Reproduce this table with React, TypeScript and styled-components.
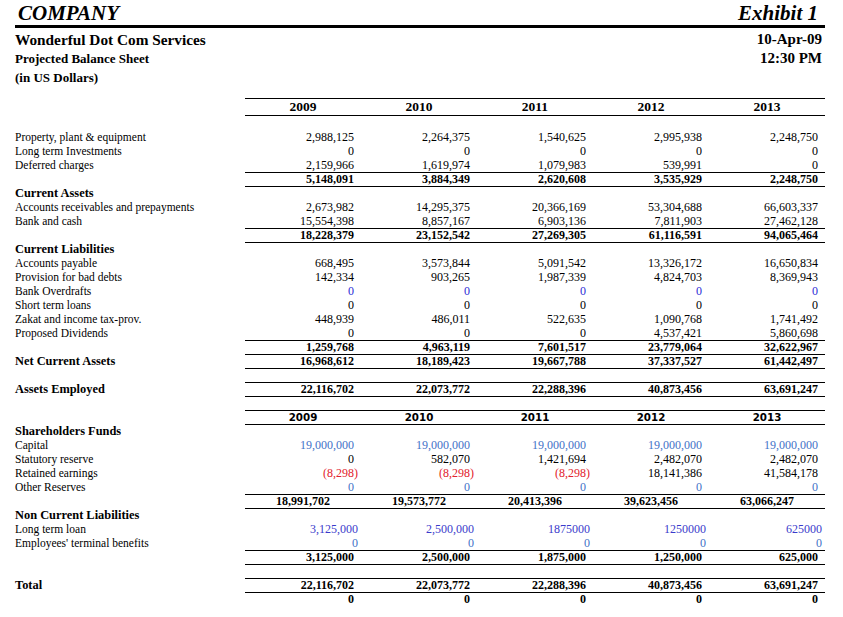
import React from "react";
import styled, { createGlobalStyle, css } from "styled-components";

const GlobalStyle = createGlobalStyle`
  html, body { margin: 0; padding: 0; background: #ffffff; }
  body { font-family: "Liberation Serif", "Times New Roman", serif; color: #000; }
  * { box-sizing: border-box; }
`;

const COLORS = {
  blue: "#2b2bd6",
  light: "#3f72c8",
  violet: "#3a3acb",
  red: "#e2212c",
};

const Page = styled.div`
  width: 843px;
  padding: 0 18px 0 15px;
`;

const TitleBar = styled.div`
  display: flex;
  justify-content: space-between;
  align-items: flex-end;
  height: 28px;
  border-bottom: 3px solid #000;
`;

const Title = styled.div<{ $side: "left" | "right" }>`
  font-size: 21px;
  font-weight: 700;
  font-style: italic;
  line-height: 23px;
  padding-left: ${(p) => (p.$side === "left" ? "3px" : "0")};
  padding-right: ${(p) => (p.$side === "right" ? "7px" : "0")};
`;

const Meta = styled.div`
  display: flex;
  justify-content: space-between;
  padding-top: 2px;
`;

const MetaLeft = styled.div`
  display: flex;
  flex-direction: column;
`;

const MetaLine = styled.div<{ $size: number }>`
  font-size: ${(p) => p.$size}px;
  font-weight: 700;
  line-height: 19px;
  white-space: nowrap;
`;

const MetaRight = styled.div`
  display: flex;
  flex-direction: column;
  align-items: flex-end;
  padding-right: 3px;
  font-size: 15px;
  font-weight: 700;
  line-height: 19px;
`;

const Sheet = styled.div`
  margin-top: 11px;
`;

const Grid = styled.div<{ $h: number }>`
  display: grid;
  grid-template-columns: 230px repeat(5, 116px);
  height: ${(p) => p.$h}px;
`;

const HeaderGrid = styled(Grid)`
  margin-bottom: 14px;
`;

const YearCell = styled.div<{ $sans?: boolean }>`
  text-align: center;
  font-weight: 700;
  ${(p) =>
    p.$sans
      ? css`
          font-family: "DejaVu Sans", Tahoma, sans-serif;
          font-size: 10.3px;
          line-height: 14px;
          box-shadow: inset 0 1px 0 #000, 0 1px 0 #000;
        `
      : css`
          font-size: 13.5px;
          line-height: 16px;
          border-top: 1px solid #000;
          border-bottom: 1px solid #000;
        `}
`;

const Label = styled.div<{ $bold?: boolean }>`
  font-size: ${(p) => (p.$bold ? 12.4 : 11.5)}px;
  line-height: 14px;
  font-weight: ${(p) => (p.$bold ? 700 : 400)};
  white-space: nowrap;
`;

const Cell = styled.div<{
  $bold?: boolean;
  $color?: string;
  $center?: boolean;
  $pr: number;
  $top?: boolean;
  $bottom?: boolean;
}>`
  font-size: 12px;
  line-height: 14px;
  white-space: nowrap;
  font-weight: ${(p) => (p.$bold ? 700 : 400)};
  color: ${(p) => p.$color || "#000"};
  text-align: ${(p) => (p.$center ? "center" : "right")};
  padding-right: ${(p) => (p.$center ? 0 : p.$pr)}px;
  box-shadow: ${(p) => {
    const s: string[] = [];
    if (p.$top) s.push("inset 0 1px 0 #000");
    if (p.$bottom) s.push("0 1px 0 #000");
    return s.length ? s.join(", ") : "none";
  }};
`;

type V = string | { t: string; c?: string; pr?: number };

type RowDef = {
  label?: string;
  labelBold?: boolean;
  values?: V[];
  bold?: boolean;
  top?: boolean;
  bottom?: boolean;
  center?: boolean;
  years?: boolean;
};

const YEARS = ["2009", "2010", "2011", "2012", "2013"];

const five = (v: V): V[] => [v, v, v, v, v];

const rows: RowDef[] = [
  { label: "Property, plant & equipment", values: ["2,988,125", "2,264,375", "1,540,625", "2,995,938", "2,248,750"] },
  { label: "Long term Investments", values: five("0") },
  { label: "Deferred charges", values: ["2,159,966", "1,619,974", "1,079,983", "539,991", "0"] },
  { values: ["5,148,091", "3,884,349", "2,620,608", "3,535,929", "2,248,750"], bold: true, top: true, bottom: true },
  { label: "Current Assets", labelBold: true },
  { label: "Accounts receivables and prepayments", values: ["2,673,982", "14,295,375", "20,366,169", "53,304,688", "66,603,337"] },
  { label: "Bank and cash", values: ["15,554,398", "8,857,167", "6,903,136", "7,811,903", "27,462,128"] },
  { values: ["18,228,379", "23,152,542", "27,269,305", "61,116,591", "94,065,464"], bold: true, top: true, bottom: true },
  { label: "Current Liabilities", labelBold: true },
  { label: "Accounts payable", values: ["668,495", "3,573,844", "5,091,542", "13,326,172", "16,650,834"] },
  { label: "Provision for bad debts", values: ["142,334", "903,265", "1,987,339", "4,824,703", "8,369,943"] },
  { label: "Bank Overdrafts", values: five({ t: "0", c: COLORS.blue }) },
  { label: "Short term loans", values: five("0") },
  { label: "Zakat and income tax-prov.", values: ["448,939", "486,011", "522,635", "1,090,768", "1,741,492"] },
  { label: "Proposed Dividends", values: ["0", "0", "0", "4,537,421", "5,860,698"] },
  { values: ["1,259,768", "4,963,119", "7,601,517", "23,779,064", "32,622,967"], bold: true, top: true },
  { label: "Net Current Assets", labelBold: true, values: ["16,968,612", "18,189,423", "19,667,788", "37,337,527", "61,442,497"], bold: true, top: true, bottom: true },
  {},
  { label: "Assets Employed", labelBold: true, values: ["22,116,702", "22,073,772", "22,288,396", "40,873,456", "63,691,247"], bold: true, top: true, bottom: true },
  {},
  { years: true },
  { label: "Shareholders Funds", labelBold: true },
  { label: "Capital", values: five({ t: "19,000,000", c: COLORS.light }) },
  { label: "Statutory reserve", values: ["0", "582,070", "1,421,694", "2,482,070", "2,482,070"] },
  {
    label: "Retained earnings",
    values: [
      { t: "(8,298)", c: COLORS.red, pr: 3 },
      { t: "(8,298)", c: COLORS.red, pr: 3 },
      { t: "(8,298)", c: COLORS.red, pr: 3 },
      "18,141,386",
      "41,584,178",
    ],
  },
  { label: "Other Reserves", values: five({ t: "0", c: COLORS.light }) },
  { values: ["18,991,702", "19,573,772", "20,413,396", "39,623,456", "63,066,247"], bold: true, center: true, top: true, bottom: true },
  { label: "Non Current Liabilities", labelBold: true },
  {
    label: "Long term loan",
    values: [
      { t: "3,125,000", c: COLORS.violet, pr: 3 },
      { t: "2,500,000", c: COLORS.violet, pr: 3 },
      { t: "1875000", c: COLORS.violet, pr: 3 },
      { t: "1250000", c: COLORS.violet, pr: 3 },
      { t: "625000", c: COLORS.violet, pr: 3 },
    ],
  },
  { label: "Employees' terminal benefits", values: five({ t: "0", c: COLORS.light, pr: 3 }) },
  { values: ["3,125,000", "2,500,000", "1,875,000", "1,250,000", "625,000"], bold: true, top: true, bottom: true },
  {},
  { label: "Total", labelBold: true, values: ["22,116,702", "22,073,772", "22,288,396", "40,873,456", "63,691,247"], bold: true, top: true, bottom: true },
  { values: five("0"), bold: true },
];

function SheetRow({ row }: { row: RowDef }) {
  if (row.years) {
    return (
      <Grid $h={14}>
        <Label />
        {YEARS.map((y) => (
          <YearCell key={y} $sans>
            {y}
          </YearCell>
        ))}
      </Grid>
    );
  }
  return (
    <Grid $h={14}>
      <Label $bold={row.labelBold}>{row.label}</Label>
      {(row.values || []).map((v, i) => {
        const val = typeof v === "string" ? { t: v } : v;
        return (
          <Cell
            key={i}
            $bold={row.bold}
            $color={val.c}
            $center={row.center}
            $pr={val.pr ?? 7}
            $top={row.top}
            $bottom={row.bottom}
          >
            {val.t}
          </Cell>
        );
      })}
    </Grid>
  );
}

export default function App() {
  return (
    <>
      <GlobalStyle />
      <Page>
        <TitleBar>
          <Title $side="left">COMPANY</Title>
          <Title $side="right">Exhibit 1</Title>
        </TitleBar>
        <Meta>
          <MetaLeft>
            <MetaLine $size={15.3}>Wonderful Dot Com Services</MetaLine>
            <MetaLine $size={13}>Projected Balance Sheet</MetaLine>
            <MetaLine $size={13}>(in US Dollars)</MetaLine>
          </MetaLeft>
          <MetaRight>
            <div>10-Apr-09</div>
            <div>12:30 PM</div>
          </MetaRight>
        </Meta>
        <Sheet>
          <HeaderGrid $h={18}>
            <Label />
            {YEARS.map((y) => (
              <YearCell key={y}>{y}</YearCell>
            ))}
          </HeaderGrid>
          {rows.map((r, i) => (
            <SheetRow key={i} row={r} />
          ))}
        </Sheet>
      </Page>
    </>
  );
}
